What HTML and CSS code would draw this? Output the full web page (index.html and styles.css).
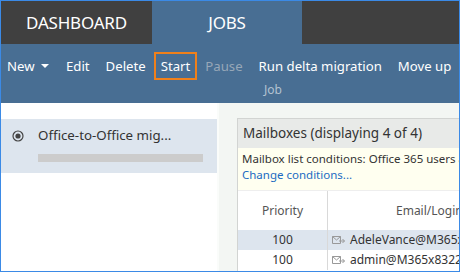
FILE: index.html
```html
<!DOCTYPE html>
<html>
<head>
<meta charset="utf-8">
<link rel="stylesheet" href="styles.css">
</head>
<body>
<div class="frame">
  <div class="tabs">
    <div class="tab tab-dark">DASHBOARD</div>
    <div class="tab tab-active">JOBS</div>
    <div class="tab-fill"></div>
  </div>
  <div class="toolbar">
    <div class="buttons">
      <span class="btn btn-new">New <span class="caret"></span></span>
      <span class="btn">Edit</span>
      <span class="btn">Delete</span>
      <span class="btn btn-focus">Start</span>
      <span class="btn btn-disabled">Pause</span>
      <span class="btn">Run delta migration</span>
      <span class="btn">Move up</span>
    </div>
    <div class="group-label">Job</div>
  </div>
  <div class="content">
    <div class="left">
      <div class="job-item">
        <svg class="radio" width="12" height="12" viewBox="0 0 12 12">
          <circle cx="6" cy="6" r="5" fill="none" stroke="#444" stroke-width="1.2"/>
          <circle cx="6" cy="6" r="2.6" fill="#444"/>
        </svg>
        <div class="job-body">
          <div class="job-name">Office-to-Office mig...</div>
          <div class="job-bar"></div>
        </div>
      </div>
    </div>
    <div class="right">
      <div class="panel">
        <div class="panel-head">Mailboxes (displaying 4 of 4)</div>
        <div class="panel-info">
          <div class="info-text">Mailbox list conditions: Office 365 users a</div>
          <a class="info-link">Change conditions...</a>
        </div>
        <div class="table">
          <div class="row row-head">
            <div class="cell c-prio">Priority</div>
            <div class="cell c-mail head-mail">Email/Login</div>
          </div>
          <div class="row row-sel">
            <div class="cell c-prio">100</div>
            <div class="cell c-mail"><svg class="env" width="13" height="10" viewBox="0 0 13 10"><path d="M0.5 1.5h8v7h-8z M0.5 1.5l4 3.5l4-3.5" fill="none" stroke="#999" stroke-width="1"/><path d="M7 6h5.5 M10.5 4l2 2l-2 2" fill="none" stroke="#999" stroke-width="1"/></svg>AdeleVance@M365x8</div>
          </div>
          <div class="row">
            <div class="cell c-prio">100</div>
            <div class="cell c-mail"><svg class="env" width="13" height="10" viewBox="0 0 13 10"><path d="M0.5 1.5h8v7h-8z M0.5 1.5l4 3.5l4-3.5" fill="none" stroke="#999" stroke-width="1"/><path d="M7 6h5.5 M10.5 4l2 2l-2 2" fill="none" stroke="#999" stroke-width="1"/></svg>admin@M365x83228</div>
          </div>
        </div>
      </div>
    </div>
  </div>
</div>
</body>
</html>
```
FILE: styles.css
```css
html, body {
  margin: 0;
  padding: 0;
}
body {
  font-family: "Noto Sans", "Open Sans", sans-serif;
  width: 460px;
  height: 272px;
  overflow: hidden;
}
.frame {
  box-sizing: border-box;
  width: 460px;
  height: 272px;
  border: 1px solid #3b8ae6;
  display: flex;
  flex-direction: column;
  overflow: hidden;
  background: #fff;
}
.tabs {
  display: flex;
  height: 43px;
  flex: none;
}
.tab {
  width: 151px;
  display: flex;
  align-items: center;
  justify-content: center;
  color: #fff;
  font-size: 17px;
  letter-spacing: -0.2px;
}
.tab-dark { background: #404040; }
.tab-active { background: #486e93; width: 150px; }
.tab-fill { flex: 1; background: #404040; }
.toolbar {
  background: #486e93;
  height: 59px;
  flex: none;
  display: flex;
  flex-direction: column;
}
.buttons {
  display: flex;
  align-items: center;
  padding: 8px 0 0 6px;
  height: 28px;
  color: #fff;
  font-size: 13.2px;
}
.btn {
  height: 26px;
  line-height: 26px;
  padding: 0 8px;
  white-space: nowrap;
}
.btn-new { padding-left: 0; margin-right: 1px; }
.caret {
  display: inline-block;
  width: 0;
  height: 0;
  border-left: 4px solid transparent;
  border-right: 4px solid transparent;
  border-top: 4px solid #fff;
  vertical-align: middle;
  margin-left: 3px;
  margin-top: -2px;
}
.btn-focus {
  border: 2px solid #f0801a;
  padding: 0 5px;
  height: 24px;
  line-height: 24px;
}
.btn-disabled { color: #97a7b8; }
.group-label {
  color: #b3c2d1;
  font-size: 12px;
  padding-left: 263px;
  margin-top: 1px;
}
.content {
  flex: 1;
  display: flex;
  min-height: 0;
}
.left {
  width: 216px;
  flex: none;
  padding-top: 16px;
  background: #fff;
}
.job-item {
  background: #dde5ee;
  height: 54px;
  display: flex;
  box-sizing: border-box;
  padding: 8px 0 0 11px;
}
.radio { margin-top: 3px; flex: none; }
.job-body { margin-left: 14px; }
.job-name {
  color: #333;
  font-size: 13.3px;
  line-height: 16px;
}
.job-bar {
  width: 165px;
  height: 8px;
  background: #cccccc;
  margin-top: 11px;
}
.right {
  flex: 1;
  background: #f3f6f3;
  border-left: 2px solid #fafcfa;
  padding: 15px 0 0 18px;
  min-width: 0;
}
.panel {
  border-left: 1px solid #d2d4d2;
  border-top: 1px solid #d2d4d2;
  background: #fff;
  height: 200px;
  overflow: hidden;
}
.panel-head {
  background: #e8eae8;
  height: 29px;
  line-height: 29px;
  padding-left: 5px;
  font-size: 13.5px;
  color: #333;
  white-space: nowrap;
}
.panel-info {
  background: #fffff0;
  height: 43px;
  box-sizing: border-box;
  padding: 3px 0 0 4px;
  font-size: 11.5px;
  line-height: 16px;
  white-space: nowrap;
  border-bottom: 1px solid #eeeeee;
}
.info-text { color: #333; }
.info-link { color: #1b6bc2; }
.row {
  display: flex;
  height: 20px;
  font-size: 12px;
  color: #333;
}
.row-head {
  height: 39px;
  color: #555;
}
.row-sel { background: #dde5ee; }
.cell { white-space: nowrap; }
.c-prio {
  width: 89px;
  flex: none;
  text-align: center;
  line-height: 20px;
  border-right: 1px solid #d9d9d9;
}
.row-head .c-prio { line-height: 39px; }
.c-mail {
  padding-left: 4px;
  line-height: 20px;
  display: flex;
  align-items: center;
}
.head-mail {
  padding-left: 68px;
  line-height: 39px;
}
.env { margin-right: 5px; flex: none; }
```
